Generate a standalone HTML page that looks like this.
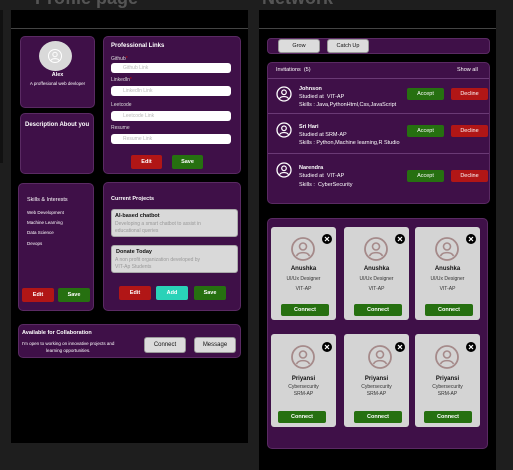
<!DOCTYPE html>
<html><head><meta charset="utf-8"><style>
*{margin:0;padding:0;box-sizing:border-box}
body{width:513px;height:467px;background:#1e1e1e;position:relative;overflow:hidden;font-family:"Liberation Sans",sans-serif;color:#fff}
.a{position:absolute}
.p{position:absolute;background:#3f1048;border:1px solid #5a2a63;border-radius:5px}
.t{position:absolute;font-size:6px;white-space:nowrap}
.b{position:absolute;font-size:5.5px;font-weight:bold;color:#fff;text-align:center;border-radius:2px}
.red{background:#b11616}.grn{background:#267010}
.inp{position:absolute;background:#fff;border-radius:3px;font-size:5px;color:#bbb;padding-left:12px;line-height:10px;height:10px;left:111px;width:120px}
.lb{position:absolute;font-size:5px;color:#ddd;left:111px}
.gb{position:absolute;background:#dcdcdc;color:#111;border:1px solid #999;border-radius:3px;font-size:6px;text-align:center}
.card{position:absolute;background:#d4d4d4;border-radius:3px;width:65px;height:93px;color:#111;text-align:center}
.card .n{position:absolute;left:0;width:100%;font-size:6px;font-weight:bold}
.card .s{position:absolute;left:0;width:100%;font-size:5px;color:#333}
.card .c{position:absolute;left:10px;width:48px;height:12px;background:#267010;color:#fff;font-size:5.5px;font-weight:bold;line-height:12px;border-radius:2px}
</style></head><body>
<div class="a" style="left:35px;top:-12px;font-size:18px;color:#555;font-weight:bold">Profile page</div>
<div class="a" style="left:262px;top:-12px;font-size:18px;color:#555;font-weight:bold">Network</div>
<div class="a" style="left:0;top:10px;width:3px;height:153px;background:#111"></div>
<div class="a" style="left:11px;top:10px;width:237px;height:433px;background:#000"></div>
<div class="a" style="left:11px;top:28px;width:237px;height:1px;background:#444"></div>
<div class="a" style="left:259px;top:10px;width:237px;height:460px;background:#000"></div>
<div class="a" style="left:259px;top:28px;width:237px;height:1px;background:#444"></div>

<!-- profile -->
<div class="p" style="left:20px;top:36px;width:75px;height:72px"></div>
<div class="a" style="left:39px;top:41px;width:33px;height:30px;border-radius:50%;background:#d9d9d9"></div>
<svg class="a" style="left:47px;top:48px" width="16" height="16" viewBox="0 0 16 16"><circle cx="8" cy="8" r="6.5" fill="none" stroke="#fff" stroke-width="1"/><circle cx="8" cy="6.5" r="2.2" fill="none" stroke="#fff"/><path d="M4 12.5c1-2.5 7-2.5 8 0" fill="none" stroke="#fff"/></svg>
<div class="t" style="left:20px;width:75px;text-align:center;top:72px;font-weight:bold;font-size:5.5px">Alex</div>
<div class="t" style="left:20px;width:75px;text-align:center;top:81px;font-size:4.5px">A proffesional web devloper</div>

<div class="p" style="left:20px;top:113px;width:74px;height:61px"></div>
<div class="t" style="left:25px;top:122px;font-weight:bold;font-size:6px">Description About you</div>

<div class="p" style="left:103px;top:36px;width:138px;height:138px"></div>
<div class="t" style="left:111px;top:43px;font-weight:bold;font-size:6px">Professional Links</div>
<div class="lb" style="top:56px">Github<span style="color:#c00">*</span></div>
<div class="inp" style="top:63px">Github Link</div>
<div class="lb" style="top:77px">LinkedIn<span style="color:#c00">*</span></div>
<div class="inp" style="top:86px">LinkedIn Link</div>
<div class="lb" style="top:102px">Leetcode</div>
<div class="inp" style="top:111px">Leetcode Link</div>
<div class="lb" style="top:125px">Resume</div>
<div class="inp" style="top:134px">Resume Link</div>
<div class="b red" style="left:131px;top:155px;width:31px;height:14px;line-height:14px">Edit</div>
<div class="b grn" style="left:172px;top:155px;width:31px;height:14px;line-height:14px">Save</div>

<!-- skills -->
<div class="p" style="left:18px;top:183px;width:76px;height:128px"></div>
<div class="t" style="left:27px;top:197px;font-size:5.5px">Skills &amp; Interests</div>
<div class="t" style="left:27px;top:210px;font-size:4.5px">Web Development</div>
<div class="t" style="left:27px;top:220px;font-size:4.5px">Machine Learning</div>
<div class="t" style="left:27px;top:230px;font-size:4.5px">Data Science</div>
<div class="t" style="left:27px;top:241px;font-size:4.5px">Devops</div>
<div class="b red" style="left:22px;top:288px;width:32px;height:14px;line-height:14px">Edit</div>
<div class="b grn" style="left:58px;top:288px;width:32px;height:14px;line-height:14px">Save</div>

<div class="p" style="left:103px;top:182px;width:138px;height:129px"></div>
<div class="t" style="left:111px;top:196px;font-size:5.5px;font-weight:bold">Current Projects</div>
<div class="a" style="left:111px;top:209px;width:127px;height:28px;background:#d9d9d9;border-radius:3px;border:1px solid #aaa"></div>
<div class="t" style="left:115px;top:213px;color:#111;font-weight:bold;font-size:5.5px">AI-based chatbot</div>
<div class="t" style="left:115px;top:221px;color:#999;font-size:5px;line-height:7px">Developing a smart chatbot to assist in<br>educational queries</div>
<div class="a" style="left:111px;top:245px;width:127px;height:28px;background:#d9d9d9;border-radius:3px;border:1px solid #aaa"></div>
<div class="t" style="left:116px;top:249px;color:#111;font-weight:bold;font-size:5.5px">Donate Today</div>
<div class="t" style="left:115px;top:257px;color:#999;font-size:5px;line-height:7px">A non profit organization developed by<br>VIT-Ap Students</div>
<div class="b red" style="left:119px;top:286px;width:32px;height:14px;line-height:14px">Edit</div>
<div class="b" style="left:156px;top:286px;width:32px;height:14px;line-height:14px;background:#2ad2b8">Add</div>
<div class="b grn" style="left:194px;top:286px;width:32px;height:14px;line-height:14px">Save</div>

<div class="p" style="left:18px;top:324px;width:223px;height:34px"></div>
<div class="t" style="left:22px;top:330px;font-size:5.5px;font-weight:bold">Available for Collaboration</div>
<div class="t" style="left:22px;top:340px;font-size:4.5px;line-height:7px;text-align:center">I'm open to working on innovative projects and<br>learning opportunities.</div>
<div class="gb" style="left:144px;top:337px;width:42px;height:16px;line-height:14px">Connect</div>
<div class="gb" style="left:194px;top:337px;width:42px;height:16px;line-height:14px">Message</div>

<!-- network -->
<div class="p" style="left:267px;top:38px;width:223px;height:16px;border-radius:4px"></div>
<div class="gb" style="left:278px;top:39px;width:42px;height:14px;line-height:13px;font-size:5.5px">Grow</div>
<div class="gb" style="left:327px;top:39px;width:42px;height:14px;line-height:13px;font-size:5.5px">Catch Up</div>

<div class="p" style="left:267px;top:62px;width:223px;height:142px"></div>
<div class="t" style="left:276px;top:67px;font-size:5.5px">Invitations &nbsp;(5)</div>
<div class="t" style="left:457px;top:67px;font-size:5.5px">Show all</div>
<div class="a" style="left:268px;top:78px;width:221px;height:1px;background:#6a3a75"></div>
<div class="a" style="left:268px;top:113px;width:221px;height:1px;background:#6a3a75"></div>
<div class="a" style="left:268px;top:153px;width:221px;height:1px;background:#6a3a75"></div>

<svg class="a" style="left:276px;top:86px" width="16" height="16" viewBox="0 0 16 16"><circle cx="8" cy="8" r="7" fill="none" stroke="#fff" stroke-width="1.3"/><circle cx="8" cy="6.3" r="2.3" fill="none" stroke="#fff" stroke-width="1.2"/><path d="M3.5 12.8c1.2-3 7.8-3 9 0" fill="none" stroke="#fff" stroke-width="1.2"/></svg>
<div class="t" style="left:299px;top:85px;font-size:5.5px;font-weight:bold;line-height:8px">Johnson</div>
<div class="t" style="left:299px;top:93px;font-size:5.5px;line-height:8px">Studied at &nbsp;VIT-AP<br>Skills : Java,PythonHtml,Css,JavaScript</div>
<div class="b grn" style="left:407px;top:88px;width:37px;height:12px;line-height:12px;font-weight:normal">Accept</div>
<div class="b red" style="left:451px;top:88px;width:37px;height:12px;line-height:12px;font-weight:normal">Decline</div>

<svg class="a" style="left:276px;top:122px" width="16" height="16" viewBox="0 0 16 16"><circle cx="8" cy="8" r="7" fill="none" stroke="#fff" stroke-width="1.3"/><circle cx="8" cy="6.3" r="2.3" fill="none" stroke="#fff" stroke-width="1.2"/><path d="M3.5 12.8c1.2-3 7.8-3 9 0" fill="none" stroke="#fff" stroke-width="1.2"/></svg>
<div class="t" style="left:299px;top:123px;font-size:5.5px;font-weight:bold;line-height:8px">Sri Hari</div>
<div class="t" style="left:299px;top:131px;font-size:5.5px;line-height:8px">Studied at SRM-AP<br>Skills : Python,Machine learning,R Studio</div>
<div class="b grn" style="left:407px;top:125px;width:37px;height:12px;line-height:12px;font-weight:normal">Accept</div>
<div class="b red" style="left:451px;top:125px;width:37px;height:12px;line-height:12px;font-weight:normal">Decline</div>

<svg class="a" style="left:276px;top:162px" width="16" height="16" viewBox="0 0 16 16"><circle cx="8" cy="8" r="7" fill="none" stroke="#fff" stroke-width="1.3"/><circle cx="8" cy="6.3" r="2.3" fill="none" stroke="#fff" stroke-width="1.2"/><path d="M3.5 12.8c1.2-3 7.8-3 9 0" fill="none" stroke="#fff" stroke-width="1.2"/></svg>
<div class="t" style="left:299px;top:164px;font-size:5.5px;font-weight:bold;line-height:8px">Narendra</div>
<div class="t" style="left:299px;top:172px;font-size:5.5px;line-height:9px">Studied at &nbsp;VIT-AP<br>Skills : &nbsp;CyberSecurity</div>
<div class="b grn" style="left:407px;top:170px;width:37px;height:12px;line-height:12px;font-weight:normal">Accept</div>
<div class="b red" style="left:451px;top:170px;width:37px;height:12px;line-height:12px;font-weight:normal">Decline</div>

<div class="p" style="left:267px;top:218px;width:221px;height:231px"></div>

<!-- cards row1 -->
<div class="card" style="left:271px;top:227px">
<svg class="a" style="left:20px;top:10px" width="24" height="24" viewBox="0 0 24 24"><circle cx="12" cy="12" r="11" fill="none" stroke="#a58a8a" stroke-width="1.8"/><circle cx="12" cy="9.5" r="3.5" fill="none" stroke="#a58a8a" stroke-width="1.6"/><path d="M5.5 19c2-4.5 11-4.5 13 0" fill="none" stroke="#a58a8a" stroke-width="1.6"/></svg>
<svg class="a" style="left:51px;top:7px" width="10" height="10" viewBox="0 0 10 10"><circle cx="5" cy="5" r="5" fill="#000"/><path d="M3 3l4 4M7 3l-4 4" stroke="#fff" stroke-width="1.2"/></svg>
<div class="n" style="top:39px">Anushka</div><div class="s" style="top:49px">UI/Ux Designer</div><div class="s" style="top:59px">VIT-AP</div><div class="c" style="top:77px">Connect</div></div>
<div class="card" style="left:344px;top:227px">
<svg class="a" style="left:20px;top:10px" width="24" height="24" viewBox="0 0 24 24"><circle cx="12" cy="12" r="11" fill="none" stroke="#a58a8a" stroke-width="1.8"/><circle cx="12" cy="9.5" r="3.5" fill="none" stroke="#a58a8a" stroke-width="1.6"/><path d="M5.5 19c2-4.5 11-4.5 13 0" fill="none" stroke="#a58a8a" stroke-width="1.6"/></svg>
<svg class="a" style="left:51px;top:7px" width="10" height="10" viewBox="0 0 10 10"><circle cx="5" cy="5" r="5" fill="#000"/><path d="M3 3l4 4M7 3l-4 4" stroke="#fff" stroke-width="1.2"/></svg>
<div class="n" style="top:39px">Anushka</div><div class="s" style="top:49px">UI/Ux Designer</div><div class="s" style="top:59px">VIT-AP</div><div class="c" style="top:77px">Connect</div></div>
<div class="card" style="left:415px;top:227px">
<svg class="a" style="left:20px;top:10px" width="24" height="24" viewBox="0 0 24 24"><circle cx="12" cy="12" r="11" fill="none" stroke="#a58a8a" stroke-width="1.8"/><circle cx="12" cy="9.5" r="3.5" fill="none" stroke="#a58a8a" stroke-width="1.6"/><path d="M5.5 19c2-4.5 11-4.5 13 0" fill="none" stroke="#a58a8a" stroke-width="1.6"/></svg>
<svg class="a" style="left:51px;top:7px" width="10" height="10" viewBox="0 0 10 10"><circle cx="5" cy="5" r="5" fill="#000"/><path d="M3 3l4 4M7 3l-4 4" stroke="#fff" stroke-width="1.2"/></svg>
<div class="n" style="top:39px">Anushka</div><div class="s" style="top:49px">UI/Ux Designer</div><div class="s" style="top:59px">VIT-AP</div><div class="c" style="top:77px">Connect</div></div>
<!-- row2 -->
<div class="card" style="left:271px;top:334px">
<svg class="a" style="left:20px;top:11px" width="24" height="24" viewBox="0 0 24 24"><circle cx="12" cy="12" r="11" fill="none" stroke="#a58a8a" stroke-width="1.8"/><circle cx="12" cy="9.5" r="3.5" fill="none" stroke="#a58a8a" stroke-width="1.6"/><path d="M5.5 19c2-4.5 11-4.5 13 0" fill="none" stroke="#a58a8a" stroke-width="1.6"/></svg>
<svg class="a" style="left:51px;top:8px" width="10" height="10" viewBox="0 0 10 10"><circle cx="5" cy="5" r="5" fill="#000"/><path d="M3 3l4 4M7 3l-4 4" stroke="#fff" stroke-width="1.2"/></svg>
<div class="n" style="top:42px">Priyansi</div><div class="s" style="top:50px">Cybersecurity</div><div class="s" style="top:57px">SRM-AP</div><div class="c" style="top:77px;left:7px">Connect</div></div>
<div class="card" style="left:344px;top:334px">
<svg class="a" style="left:24px;top:11px" width="24" height="24" viewBox="0 0 24 24"><circle cx="12" cy="12" r="11" fill="none" stroke="#a58a8a" stroke-width="1.8"/><circle cx="12" cy="9.5" r="3.5" fill="none" stroke="#a58a8a" stroke-width="1.6"/><path d="M5.5 19c2-4.5 11-4.5 13 0" fill="none" stroke="#a58a8a" stroke-width="1.6"/></svg>
<svg class="a" style="left:51px;top:8px" width="10" height="10" viewBox="0 0 10 10"><circle cx="5" cy="5" r="5" fill="#000"/><path d="M3 3l4 4M7 3l-4 4" stroke="#fff" stroke-width="1.2"/></svg>
<div class="n" style="top:42px">Priyansi</div><div class="s" style="top:50px">Cybersecurity</div><div class="s" style="top:57px">SRM-AP</div><div class="c" style="top:77px">Connect</div></div>
<div class="card" style="left:415px;top:334px">
<svg class="a" style="left:20px;top:11px" width="24" height="24" viewBox="0 0 24 24"><circle cx="12" cy="12" r="11" fill="none" stroke="#a58a8a" stroke-width="1.8"/><circle cx="12" cy="9.5" r="3.5" fill="none" stroke="#a58a8a" stroke-width="1.6"/><path d="M5.5 19c2-4.5 11-4.5 13 0" fill="none" stroke="#a58a8a" stroke-width="1.6"/></svg>
<svg class="a" style="left:51px;top:8px" width="10" height="10" viewBox="0 0 10 10"><circle cx="5" cy="5" r="5" fill="#000"/><path d="M3 3l4 4M7 3l-4 4" stroke="#fff" stroke-width="1.2"/></svg>
<div class="n" style="top:42px">Priyansi</div><div class="s" style="top:50px">Cybersecurity</div><div class="s" style="top:57px">SRM-AP</div><div class="c" style="top:77px;left:9px">Connect</div></div>
</body></html>
